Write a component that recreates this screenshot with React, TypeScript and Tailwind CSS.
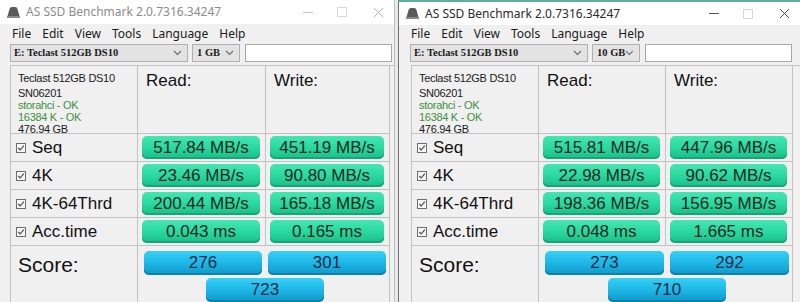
import React from 'react';

type Row = { label: string; read: string; write: string };

type Bench = {
  size: string;
  rows: Row[];
  score: [string, string, string];
};

const left: Bench = {
  size: '1 GB',
  rows: [
    { label: 'Seq', read: '517.84 MB/s', write: '451.19 MB/s' },
    { label: '4K', read: '23.46 MB/s', write: '90.80 MB/s' },
    { label: '4K-64Thrd', read: '200.44 MB/s', write: '165.18 MB/s' },
    { label: 'Acc.time', read: '0.043 ms', write: '0.165 ms' },
  ],
  score: ['276', '301', '723'],
};

const right: Bench = {
  size: '10 GB',
  rows: [
    { label: 'Seq', read: '515.81 MB/s', write: '447.96 MB/s' },
    { label: '4K', read: '22.98 MB/s', write: '90.62 MB/s' },
    { label: '4K-64Thrd', read: '198.36 MB/s', write: '156.95 MB/s' },
    { label: 'Acc.time', read: '0.048 ms', write: '1.665 ms' },
  ],
  score: ['273', '292', '710'],
};

const sans = { fontFamily: '"Liberation Sans", Arial, sans-serif' };
const ui = { fontFamily: '"Noto Sans", "Open Sans", sans-serif' };
const serif = { fontFamily: '"Liberation Serif", serif' };

const DriveIcon = () => (
  <svg width="15" height="13" viewBox="0 0 15 13" aria-hidden="true">
    <path d="M1 12 L3.5 3 Q4 1 6 1 L9 1 Q11 1 11.5 3 L14 12 Z" fill="#5a5a5a" />
    <rect x="1" y="10" width="13" height="2" fill="#8a8a8a" />
  </svg>
);

const Chevron = () => (
  <svg width="9" height="6" viewBox="0 0 9 6" aria-hidden="true">
    <path d="M1 1 L4.5 4.5 L8 1" fill="none" stroke="#6a6a6a" strokeWidth="1.1" />
  </svg>
);

const CheckBox = () => (
  <span className="inline-flex items-center justify-center w-[10px] h-[10px] border border-[#6d6d6d] bg-[#f7f7f7] mr-[6px]">
    <svg width="8" height="8" viewBox="0 0 8 8" aria-hidden="true">
      <path d="M1.3 4 L3.2 6 L6.8 1.6" fill="none" stroke="#444" strokeWidth="1.1" />
    </svg>
  </span>
);

const GreenBar = ({ value }: { value: string }) => (
  <div className="h-full px-[4px] pr-[5px] py-[2px]">
    <div
      className="h-full flex items-center justify-center rounded-[5px] bg-gradient-to-b from-[#44e6b3] via-[#2bd8a0] to-[#17bf88] shadow-[inset_0_-2px_0_#13a877] text-[17px] text-[#15291f]"
      style={sans}
    >
      {value}
    </div>
  </div>
);

const BlueBar = ({ value, className = '' }: { value: string; className?: string }) => (
  <div
    className={`h-[24px] flex items-center justify-center rounded-[5px] bg-gradient-to-b from-[#36d0f7] via-[#1eb6e6] to-[#0d98c8] shadow-[inset_0_-2px_0_#0b82b0] text-[17px] text-[#1c2a44] ${className}`}
    style={sans}
  >
    {value}
  </div>
);

const Window = ({
  data,
  active,
  cols,
}: {
  data: Bench;
  active: boolean;
  cols: string;
}) => {
  const ctrl = active ? 'text-[#4a4a4a]' : 'text-[#b5b5b5]';
  return (
    <div className="flex flex-col h-full bg-[#f0f0f0]">
      {/* Title bar */}
      <div className={`flex items-center bg-white ${active ? 'h-[26px]' : 'h-[25px]'}`}>
        <div className="pl-[6px] pr-[5px] flex items-center">
          <DriveIcon />
        </div>
        <span className={`text-[12px] ${active ? 'text-[#2b2b2b]' : 'text-[#8c8c8c]'}`} style={ui}>
          AS SSD Benchmark 2.0.7316.34247
        </span>
        <div className="ml-auto flex items-center pr-[10px]">
          <span className={`w-[10px] h-px ${active ? 'bg-[#555]' : 'bg-[#c0c0c0]'} mr-[24px]`} />
          <span className="w-[10px] h-[10px] border border-[#d6d6d6] mr-[26px]" />
          <svg width="11" height="11" viewBox="0 0 11 11" className={ctrl} aria-hidden="true">
            <path d="M1 1 L10 10 M10 1 L1 10" stroke="currentColor" strokeWidth="1" />
          </svg>
        </div>
      </div>

      {/* Menu */}
      <div className="h-[20px] flex items-center gap-[11px] pl-[12px] text-[12px] text-[#1a1a1a]" style={ui}>
        <span>File</span>
        <span>Edit</span>
        <span>View</span>
        <span>Tools</span>
        <span>Language</span>
        <span>Help</span>
      </div>

      {/* Drive selection */}
      <div className={`mt-[1px] h-[18px] flex items-stretch ${active ? 'pl-[11px]' : 'pl-[10px]'}`}>
        <div className="w-[178px] flex items-center justify-between border border-[#b0b0b0] bg-[#e3e3e3] pl-[3px] pr-[5px]">
          <span className="whitespace-nowrap text-[10.5px] font-bold text-[#1a1a1a]" style={serif}>
            E: Teclast 512GB DS10
          </span>
          <Chevron />
        </div>
        <div className="ml-[4px] w-[48px] flex items-center justify-between border border-[#b0b0b0] bg-[#e3e3e3] pl-[4px] pr-[5px]">
          <span className="whitespace-nowrap text-[10.5px] font-bold text-[#1a1a1a]" style={serif}>
            {data.size}
          </span>
          <Chevron />
        </div>
        <div className="ml-[5px] w-[147px] border border-[#a8a8a8] bg-white" />
      </div>

      {/* Results */}
      <div className={`mt-[3px] flex-1 ${active ? 'ml-[12px]' : 'ml-[10px]'}`}>
        <div className={`grid ${cols} grid-rows-[68px_28px_28px_28px_28px_1fr] h-full border-l border-t border-[#c2c2c2]`}>
          <div className="border-r border-b border-[#c2c2c2] pl-[7px] pt-[6px] text-[11px] leading-[12px] tracking-[-0.3px]" style={sans}>
            <div className="text-[#1a1a1a]">Teclast 512GB DS10</div>
            <div className="text-[#1a1a1a] mt-[3px]">SN06201</div>
            <div className="text-[#3f8f3f]">storahci - OK</div>
            <div className="text-[#3f8f3f]">16384 K - OK</div>
            <div className="text-[#1a1a1a]">476.94 GB</div>
          </div>
          <div className="border-r border-b border-[#c2c2c2] pl-[8px] pt-[2px] text-[17px] text-[#111]" style={sans}>
            Read:
          </div>
          <div className="border-r border-b border-[#c2c2c2] pl-[8px] pt-[2px] text-[17px] text-[#111]" style={sans}>
            Write:
          </div>

          {data.rows.map((r) => (
            <React.Fragment key={r.label}>
              <div className="border-r border-b border-[#c2c2c2] flex items-center pl-[5px] text-[17px] text-[#111]" style={sans}>
                <CheckBox />
                {r.label}
              </div>
              <div className="border-r border-b border-[#c2c2c2]">
                <GreenBar value={r.read} />
              </div>
              <div className="border-r border-b border-[#c2c2c2]">
                <GreenBar value={r.write} />
              </div>
            </React.Fragment>
          ))}

          <div className="border-r border-[#c2c2c2] pl-[7px] pt-[3px] text-[21px] text-[#111]" style={sans}>
            Score:
          </div>
          <div className="col-span-2 border-r border-[#c2c2c2] pt-[5px] flex flex-col">
            <div className="flex gap-[6px] pl-[6px] pr-[3px]">
              <BlueBar value={data.score[0]} className="flex-1" />
              <BlueBar value={data.score[1]} className="flex-1" />
            </div>
            <div className="flex justify-center mt-[3px] pl-[3px]">
              <BlueBar value={data.score[2]} className="w-[118px]" />
            </div>
          </div>
        </div>
      </div>
    </div>
  );
};

export default function App() {
  return (
    <div className="w-[800px] h-[302px] overflow-hidden flex bg-[#e9e9e9]">
      <div className="w-[395px] h-full border-r border-[#bdbdbd]">
        <Window data={left} active={false} cols="grid-cols-[127px_128px_124px]" />
      </div>
      <div className="w-[3px]" />
      <div className="flex-1 h-full border-l border-[#6e6e6e] border-t-2 border-t-[#5fae9c]">
        <Window data={right} active cols="grid-cols-[127px_127px_127px]" />
      </div>
    </div>
  );
}
